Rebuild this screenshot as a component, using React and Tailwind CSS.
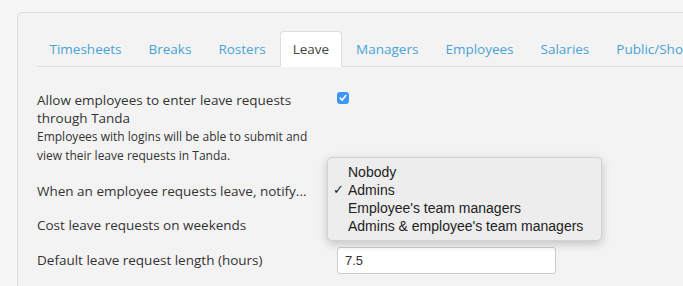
const tabs = ["Timesheets", "Breaks", "Rosters", "Leave", "Managers", "Employees", "Salaries", "Public/Shop Holidays"];

const options = ["Nobody", "Admins", "Employee's team managers", "Admins & employee's team managers"];

export default function App() {
  return (
    <div className="relative w-[683px] h-[286px] overflow-hidden bg-[#f6f6f6] pl-[17px] pt-[12px] font-['Open_Sans',sans-serif] text-[#333]">
      <div className="w-[800px] h-[400px] rounded-tl-[5px] border border-[#dedede] bg-[#f3f3f3] pl-[19px] pt-[18px]">
        <ul className="flex border-b border-[#dddddd] text-[13.5px]">
          {tabs.map((t) => (
            <li key={t} className="mr-[2px] -mb-px shrink-0">
              {t === "Leave" ? (
                <span className="flex h-[36px] items-center rounded-t-[4px] border border-[#dddddd] border-b-white bg-white px-[11.5px] text-[#444]">
                  {t}
                </span>
              ) : (
                <span className="flex h-[36px] items-center border border-transparent px-[11.5px] text-[#4aa3d6]">
                  {t}
                </span>
              )}
            </li>
          ))}
        </ul>

        <div className="pt-[24px] w-[640px]">
          <div className="flex">
            <div className="w-[300px]">
              <div className="text-[13.5px] leading-[18px]">
                Allow employees to enter leave requests through Tanda
              </div>
              <div className="w-[280px] text-[12px] leading-[19px]">
                Employees with logins will be able to submit and view their leave requests in Tanda.
              </div>
            </div>
            <div className="pt-[1px]">
              <div className="flex h-[12px] w-[12px] items-center justify-center rounded-[3px] bg-[#3c97f7]">
                <svg width="8" height="8" viewBox="0 0 8 8">
                  <path d="M1.2 4.2 L3.2 6.1 L6.8 1.6" fill="none" stroke="white" strokeWidth="1.6" strokeLinecap="round" strokeLinejoin="round" />
                </svg>
              </div>
            </div>
          </div>

          <div className="mt-[8px] flex h-[36px] items-center text-[13.5px]">
            When an employee requests leave, notify...
          </div>
          <div className="flex h-[32px] items-center text-[13.5px]">
            Cost leave requests on weekends
          </div>
          <div className="mt-[6px] flex h-[27px] items-center">
            <div className="w-[300px] text-[13.5px]">Default leave request length (hours)</div>
            <div className="flex h-[27px] w-[219px] items-center rounded-[3px] border border-[#cccccc] bg-white px-[7px] font-['Liberation_Sans',sans-serif] text-[13px]">
              7.5
            </div>
          </div>
        </div>
      </div>

      <div className="absolute left-[327px] top-[157px] w-[275px] rounded-[5px] border border-[#d2d2d2] bg-[#ededed] py-[5px] font-['Liberation_Sans',sans-serif] text-[14px] text-[#222] shadow-[0_3px_10px_rgba(0,0,0,0.2)]">
        {options.map((o) => (
          <div key={o} className="flex h-[18px] items-center">
            <span className="w-[20px] pl-[5px] text-[13px]">{o === "Admins" ? "✓" : ""}</span>
            <span>{o}</span>
          </div>
        ))}
      </div>
    </div>
  );
}
